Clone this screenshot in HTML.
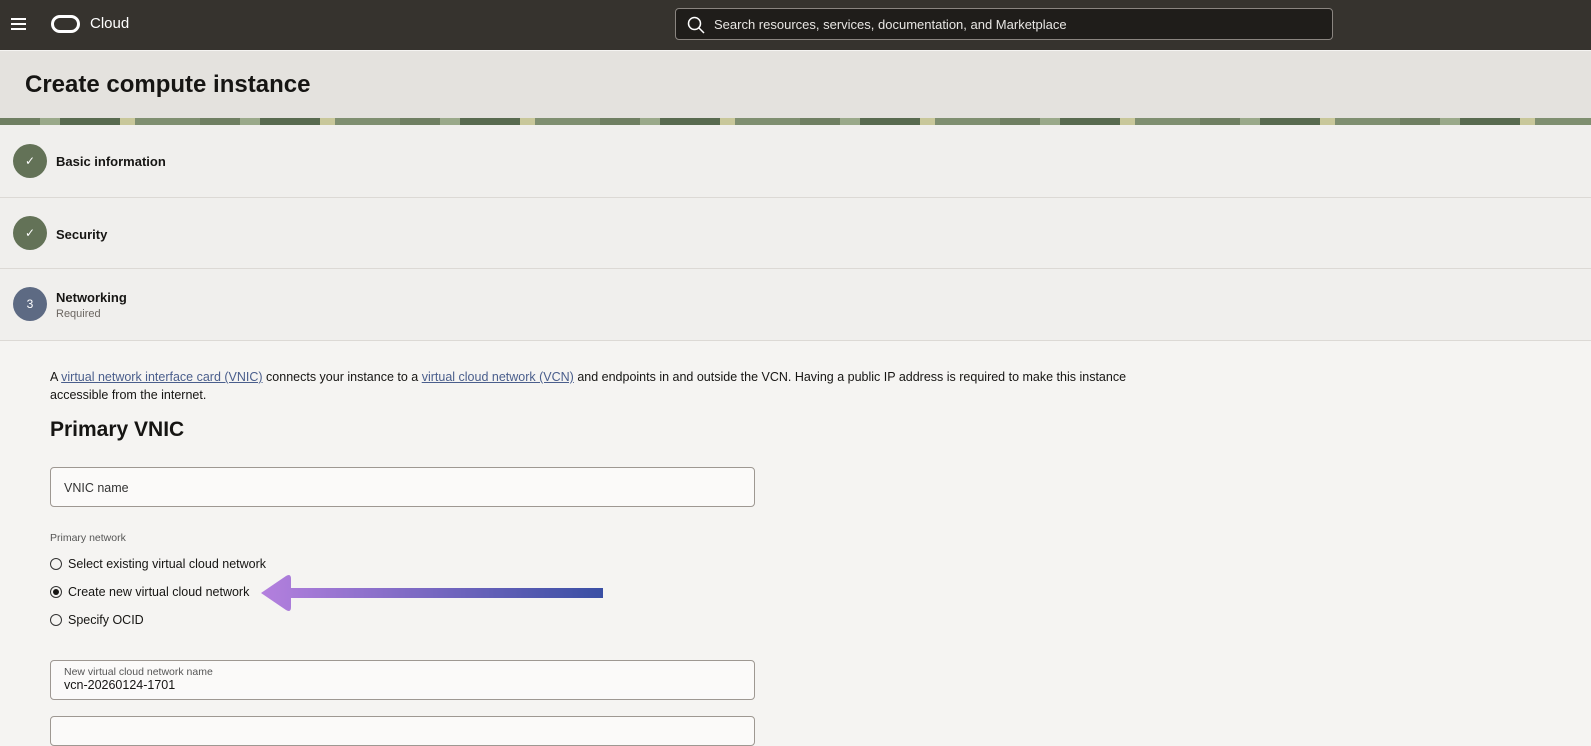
<!DOCTYPE html>
<html><head><style>
*{margin:0;padding:0;box-sizing:border-box}
body{width:1591px;height:730px;overflow:hidden;background:#f5f4f2;font-family:"Liberation Sans",sans-serif;color:#161513;position:relative}
.top{position:absolute;left:0;top:0;width:1591px;height:50px;background:#36332e}
.ham{position:absolute;left:11px;top:18px;width:15px;height:2px;background:#fff;box-shadow:0 5px 0 #fff,0 10px 0 #fff}
.logo{position:absolute;left:51px;top:15px;width:29px;height:18px;border:3px solid #fff;border-radius:9px}
.cloud{position:absolute;left:90px;top:15px;color:#fff;font-size:15px}
.search{position:absolute;left:675px;top:8px;width:658px;height:32px;border:1px solid #8a8580;border-radius:4px;background:#1f1d1a;color:#e8e6e3;font-size:13px;padding:8px 0 0 38px}
.search svg{position:absolute;left:11px;top:7px}
.title{position:absolute;left:0;top:51px;width:1591px;height:67px;background:#e4e2de}
.title h1{position:absolute;left:25px;top:20px;font-size:24px;font-weight:bold}
.strip{position:absolute;left:0;top:118px;width:1591px;height:7px;background:repeating-linear-gradient(90deg,#6f7f62 0 40px,#9aa98a 40px 60px,#586a4f 60px 120px,#c8c79a 120px 135px,#7f8f70 135px 200px)}
.sec{position:absolute;left:0;width:1591px;background:#f0efed;border-bottom:1px solid #dcd9d5}
.circ{position:absolute;left:13px;width:34px;height:34px;border-radius:50%;background:#637257;color:#fff;font-size:12px;text-align:center;line-height:34px}
.lab{position:absolute;left:56px;font-size:13px;font-weight:bold}
.sub{position:absolute;left:56px;font-size:11px;color:#6b6661}
p.t{position:absolute;left:50px;top:368px;width:1100px;font-size:12.5px;line-height:18px}
a{color:#4a5e8c;text-decoration:underline}
h2{position:absolute;left:50px;top:418px;font-size:21px;font-weight:bold}
.inp{position:absolute;left:50px;width:705px;border:1px solid #9e9892;border-radius:4px;background:#fbfaf9}
.r{position:absolute;left:50px;font-size:12.5px}
.r i{display:inline-block;width:12px;height:12px;border:1px solid #333;border-radius:50%;vertical-align:-2px;margin-right:6px;position:relative}
.r i.on:after{content:"";position:absolute;left:2px;top:2px;width:6px;height:6px;border-radius:50%;background:#161513}
</style></head><body>
<div class="top"><div class="ham"></div><div class="logo"></div><div class="cloud">Cloud</div>
<div class="search"><svg width="18" height="18" viewBox="0 0 18 18"><circle cx="7.5" cy="7.5" r="6" fill="none" stroke="#fff" stroke-width="1.5"/><path d="M12 12l5 5" stroke="#fff" stroke-width="1.5"/></svg>Search resources, services, documentation, and Marketplace</div></div>
<div class="title"><h1>Create compute instance</h1></div>
<div class="strip"></div>
<div class="sec" style="top:125px;height:73px"><div class="circ" style="top:19px">✓</div><div class="lab" style="top:29px">Basic information</div></div>
<div class="sec" style="top:198px;height:71px"><div class="circ" style="top:18px">✓</div><div class="lab" style="top:29px">Security</div></div>
<div class="sec" style="top:269px;height:72px"><div class="circ" style="top:18px;background:#5d6a83">3</div><div class="lab" style="top:21px">Networking</div><div class="sub" style="top:39px">Required</div></div>
<p class="t">A <a>virtual network interface card (VNIC)</a> connects your instance to a <a>virtual cloud network (VCN)</a> and endpoints in and outside the VCN. Having a public IP address is required to make this instance accessible from the internet.</p>
<h2>Primary VNIC</h2>
<div class="inp" style="top:467px;height:40px;font-size:12.5px;padding:13px 0 0 13px;color:#333">VNIC name</div>
<div style="position:absolute;left:50px;top:532px;font-size:10.5px;color:#555">Primary network</div>
<div class="r" style="top:557px"><i></i>Select existing virtual cloud network</div>
<div class="r" style="top:585px"><i class="on"></i>Create new virtual cloud network</div>
<div class="r" style="top:613px"><i></i>Specify OCID</div>
<svg style="position:absolute;left:258px;top:573px" width="348" height="40"><defs><linearGradient id="g"><stop offset="0" stop-color="#b480de"/><stop offset="1" stop-color="#3a4fa4"/></linearGradient></defs><path d="M3 20 L28 3 Q33 0 33 6 L33 15 L345 15 L345 25 L33 25 L33 34 Q33 40 28 37 Z" fill="url(#g)"/></svg>
<div class="inp" style="top:660px;height:40px;padding:5px 0 0 13px"><div style="font-size:10.5px;color:#555">New virtual cloud network name</div><div style="font-size:12.5px">vcn-20260124-1701</div></div>
<div class="inp" style="top:716px;height:30px"></div>
</body></html>
